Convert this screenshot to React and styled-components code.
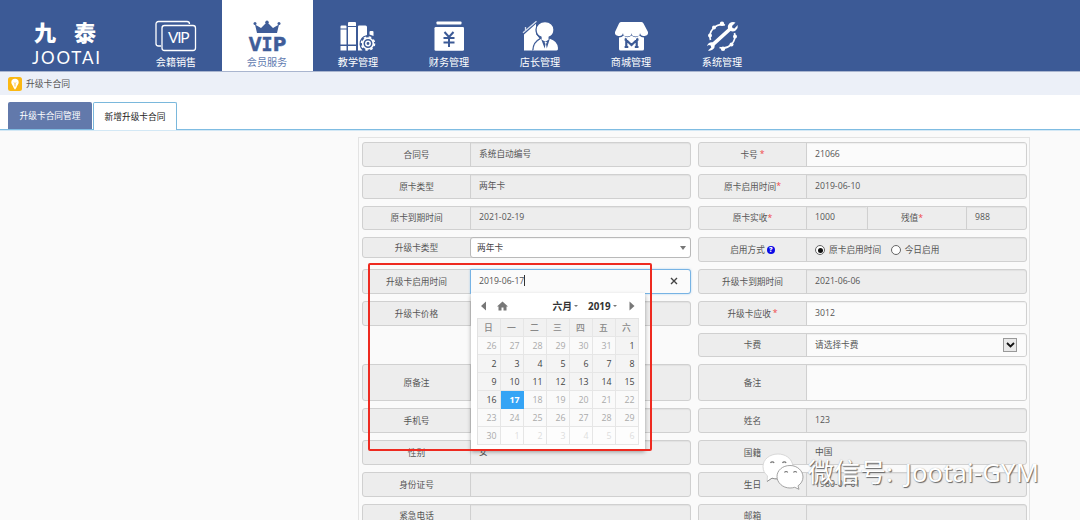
import React from 'react'
import styled, { createGlobalStyle, css } from 'styled-components'

const GlobalStyle = createGlobalStyle`
  * { box-sizing: border-box; }
  body {
    margin: 0;
    height: 520px;
    overflow: hidden;
    background: #fafafa;
    color: #555;
    font-family: "Open Sans", "Noto Sans CJK SC", sans-serif;
    font-size: 8.7px;
  }
`;

const Page = styled.div`
  position: relative;
  width: 1080px;
  height: 520px;
  overflow: hidden;
`;

const Header = styled.header`
  display: flex;
  height: 72px;
  background: #3c5a96;
  border-bottom: 1px solid #a9b5cf;
`;

const Logo = styled.div`
  width: 130.5px;
  padding: 18px 0 0 32px;
  color: #fff;
`;

const LogoName = styled.div`
  display: flex;
  gap: 18px;
  padding-left: 2px;
  height: 29px;
  line-height: 29px;
  font-size: 22px;
  font-weight: 900;
`;

const LogoLatin = styled.div`
  font-family: Lato, sans-serif;
  font-size: 17px;
  line-height: 21px;
  letter-spacing: 1.8px;
`;

const NavItem = styled.a`
  display: flex;
  flex-direction: column;
  align-items: center;
  width: 91px;
  height: 71px;
  padding-top: 19px;
  font-size: 10.1px;
  line-height: 16px;
  color: ${({ $active }) => ($active ? '#5f7bb0' : '#fff')};
  background: ${({ $active }) => ($active ? '#fff' : 'transparent')};
  svg {
    display: block;
    margin-bottom: 1px;
    flex: none;
  }
`;

const Crumb = styled.div`
  display: flex;
  align-items: center;
  gap: 4px;
  height: 23px;
  padding-left: 8px;
  background: #ecf0f8;
  font-size: 8.8px;
`;

const Tabs = styled.div`
  display: flex;
  align-items: flex-end;
  gap: 1px;
  height: 35px;
  padding-left: 8px;
  background: #fff;
  border-bottom: 1px solid #7fbce2;
  box-shadow: 0 1px 0 #d3e8f5;
`;

const Tab = styled.div`
  display: flex;
  align-items: center;
  justify-content: center;
  width: 84px;
  height: 27px;
  border-radius: 2px 2px 0 0;
  background: #6279ab;
  color: #fff;
  ${({ $active }) => $active && css`
    height: 28px;
    margin-bottom: -1px;
    padding-bottom: 1px;
    border: 1px solid #7ab8dc;
    border-bottom: 0;
    background: #fff;
    color: #222;
  `}
`;

const Panel = styled.main`
  display: grid;
  grid-template-columns: 329px 329px;
  grid-template-rows: repeat(7, 24.75px) 37px repeat(4, 24.75px);
  gap: 7px;
  width: 672px;
  margin: 7px 0 0 358px;
  padding: 4px 3px;
  border: 1px solid #e3e3e3;
`;

const Field = styled.div`
  display: flex;
  position: relative;
  height: ${({ $h }) => ($h ? `${$h}px` : '100%')};
  border: 1px solid #d0d0d0;
  border-radius: 3px;
  background: #ededed;
`;

const Label = styled.div`
  display: flex;
  align-items: center;
  justify-content: center;
  flex: none;
  width: ${({ $w }) => $w || 107}px;
`;

const Star = styled.span`
  margin-left: ${({ $gap }) => ($gap ? 2 : 0)}px;
  color: #f04848;
`;

const Value = styled.div`
  display: flex;
  align-items: center;
  flex: ${({ $w }) => ($w ? `none` : 1)};
  width: ${({ $w }) => ($w ? `${$w}px` : 'auto')};
  padding: 0 9px 1px 8px;
  border-left: 1px solid #d0d0d0;
  border-radius: 0 2px 2px 0;
  box-shadow: inset 0 1px 1px rgba(0, 0, 0, 0.05);
  background: ${({ $open }) => ($open ? '#fbfbfb' : 'transparent')};
`;

const InnerLabel = styled(Label)`
  padding-right: 10px;
  border-left: 1px solid #d0d0d0;
`;

const Combo = styled(Value)`
  justify-content: space-between;
  margin: -1px;
  margin-left: 0;
  padding: 0 4px 0 6px;
  border: 1px solid #b9b9b9;
  border-radius: 3px;
  background: #fff;
  color: #444;
`;

const DateInput = styled(Value)`
  margin: -1px;
  margin-left: 0;
  padding-right: 12px;
  border: 1px solid #77b3e4;
  border-radius: 0 3px 3px 0;
  background: #fbfbfb;
  box-shadow: 0 0 2px rgba(90, 165, 230, 0.5);
  svg { margin-left: auto; }
`;

const Caret = styled.i`
  width: 1px;
  height: 11px;
  background: #333;
`;

const Triangle = styled.i`
  border: 3px solid transparent;
  border-top: 4px solid #777;
  border-bottom: 0;
`;

const Help = styled.span`
  display: flex;
  align-items: center;
  justify-content: center;
  width: 8px;
  height: 8px;
  margin-left: 2px;
  border-radius: 50%;
  background: #0b0be6;
  color: #fff;
  font-size: 7px;
  font-weight: 800;
`;

const Radio = styled.span`
  display: flex;
  align-items: center;
  justify-content: center;
  width: 10px;
  height: 10px;
  margin-right: 4px;
  margin-top: 2px;
  border: 1px solid #666;
  border-radius: 50%;
  background: #fff;
  &::after {
    content: "";
    width: 5px;
    height: 5px;
    border-radius: 50%;
    background: ${({ $on }) => ($on ? '#111' : 'transparent')};
  }
`;

const RadioText = styled.span`
  margin-right: 9.5px;
`;

const SelectButton = styled.span`
  display: flex;
  align-items: center;
  justify-content: center;
  width: 14px;
  height: 14px;
  margin-left: auto;
  margin-top: 1px;
  border: 1px solid #999;
  background: #e9e9e9;
`;

const Calendar = styled.div`
  position: absolute;
  z-index: 2;
  top: 23px;
  left: 107.5px;
  width: 174px;
  height: 157px;
  padding: 2px 6px 0;
  background: #fff;
  box-shadow: 0 2px 4px rgba(0, 0, 0, 0.35);
`;

const CalendarHead = styled.div`
  display: flex;
  align-items: center;
  height: 23px;
  padding: 0 3px 1px 1px;
  color: #333;
  font-size: 9.8px;
  font-weight: 700;
`;

const HeadText = styled.span`
  display: flex;
  align-items: center;
  gap: 2px;
  margin-left: ${({ $ml }) => $ml}px;
  margin-right: ${({ $mr }) => $mr || 0}px;
  &::after {
    content: "";
    border: 2px solid transparent;
    border-top-color: #777;
    border-bottom: 0;
  }
`;

const Days = styled.div`
  display: grid;
  grid-template-columns: repeat(7, 23px);
  grid-auto-rows: 18px;
  width: 162px;
  border: solid #e2e2e2;
  border-width: 1px 0 0 1px;
`;

const tones = {
  on: css`background: #f4f4f4; color: #444;`,
  off: css`background: #fafafa; color: #aaa;`,
  faint: css`background: #fdfdfd; color: #ddd;`,
  head: css`background: #f1f1f1; color: #888; justify-content: center; padding: 0; font-weight: 500;`,
  today: css`background: #35a4f5; color: #fff; font-weight: 700; border-color: #35a4f5;`,
};

const Day = styled.div`
  display: flex;
  align-items: center;
  justify-content: flex-end;
  padding-right: 3px;
  border: solid #e6e6e6;
  border-width: 0 1px 1px 0;
  font-size: 8.8px;
  ${({ $tone }) => tones[$tone]}
`;

const Highlight = styled.div`
  position: absolute;
  z-index: 3;
  left: 368px;
  top: 263px;
  width: 284px;
  height: 188px;
  border: 2px solid #ee2a20;
  border-radius: 2px;
`;

const Watermark = styled.div`
  position: absolute;
  z-index: 4;
  left: 760px;
  top: 450px;
  display: flex;
  align-items: center;
  height: 46px;
  color: #fff;
  white-space: nowrap;
  text-shadow: 1px 1px 1px #666, 0 0 1px #aaa;
`;

const WatermarkText = styled.span`
  margin: -4px 0 0 2px;
  font-family: "Noto Sans", "Noto Sans CJK SC", sans-serif;
  font-size: 26px;
  font-weight: 400;
  span {
    margin-left: 5px;
    font-size: 25.5px;
    letter-spacing: 0.2px;
  }
`;

const NavSvg = ({ children }) => (
  <svg width="46" height="34" viewBox="0 0 46 34" fill="none">{children}</svg>
)

const CardsIcon = () => (
  <NavSvg>
    <path d="M8 27H5.500a2.500 2.500 0 0 1-2.500-2.500V5a2.500 2.500 0 0 1 2.500-2.500H34A2.500 2.500 0 0 1 36.500 5" stroke="#fff" strokeWidth="1.300" />
    <rect x="9" y="6.500" width="33.500" height="25" rx="2.500" stroke="#fff" strokeWidth="1.300" />
    <text x="15" y="24.300" fill="#fff" fontFamily="Lato" fontWeight="400" fontSize="15.500" textLength="21.500">VIP</text>
  </NavSvg>
)

const CrownIcon = () => (
  <NavSvg>
    <g fill="#3f5d99">
      <path d="M13 14 11 5.500l6 3.500 6-6 6 6 6-3.500-2 8.500z" />
      <circle cx="11" cy="4.500" r="1.500" />
      <circle cx="23" cy="3.300" r="1.700" />
      <circle cx="35" cy="4.500" r="1.500" />
      <g fontFamily="DejaVu Sans" fontWeight="700" fontSize="19.500" stroke="#3f5d99" strokeWidth=".5">
        <text x="4.700" y="31.500" textLength="12.700" lengthAdjust="spacingAndGlyphs">V</text>
        <text x="17.600" y="31.500" fontFamily="DejaVu Sans Mono" textLength="11" lengthAdjust="spacingAndGlyphs">I</text>
        <text x="28.800" y="31.500" textLength="13.500" lengthAdjust="spacingAndGlyphs">P</text>
      </g>
    </g>
  </NavSvg>
)

const BooksIcon = () => (
  <NavSvg>
    <g fill="#fff">
      <path d="M5.500 7.500q0-1 1-1h4q1 0 1 1v2h-6zM5.500 10.500h6v15h-6zM5.500 27h6v4.500h-6z" />
      <path d="M13 4q0-1 1-1h6q1 0 1 1v3h-8zM13 8h8v17.500h-8zM13 27h8v4.500h-8z" />
      <path d="M23 7.500q0-1 1-1h6.500q1.500 0 1.500 1.500v8q-8 2-7.500 9.500.500 4 3 6H23z" />
      <path d="M34.500 13q0-1 1-1h2q1 0 1 1v4l-4-1.500z" />
    </g>
    <circle cx="33" cy="24.500" r="5.300" stroke="#fff" strokeWidth="1.700" />
    <circle cx="33" cy="24.500" r="6.500" stroke="#fff" strokeWidth="1.600" strokeDasharray="2.550 2.550" />
    <circle cx="33" cy="24.500" r="2.200" stroke="#fff" strokeWidth="1.500" />
  </NavSvg>
)

const MoneyIcon = () => (
  <NavSvg>
    <rect x="10.500" y="2.500" width="25" height="3" rx="0.800" fill="#fff" />
    <rect x="8.500" y="8" width="29.500" height="23.800" rx="1.300" fill="#fff" />
    <path d="m18.500 13 4.500 5 4.500-5M23 18v10M17.500 19h11M17.500 23.500h11" stroke="#3c5a96" strokeWidth="2" />
  </NavSvg>
)

const ManagerIcon = () => (
  <NavSvg>
    <path d="M7 31.500V15.500L19 4.800V15l4 5q-5.500 3-6 11.500z" fill="#fff" />
    <path d="m6 13.700 13.500-11.500M8.500 11V8" stroke="#d5dded" strokeWidth="1.300" />
    <path d="M28 2.700c5.500 0 9 3.500 9 8 0 3.500-2 6.300-4.800 7.500V21l-3.700 2.500L24 21v-2.800C21 17 19 14.200 19 10.700c0-4.500 3.500-8 9-8z" fill="#fff" stroke="#3c5a96" strokeWidth="1.300" />
    <path d="M16.500 31.500q.300-8.500 7.500-11.700l3.700 9.700.8-4.500-1-2h2.500l-1 2 .8 4.500 3-9.700q7.500 2.200 8.200 9.200.2 2.500-1.500 2.500z" fill="#fff" />
    <path d="M15.800 31.500q.300-8.500 7.500-12" stroke="#3c5a96" strokeWidth="1.300" />
  </NavSvg>
)

const ShopIcon = () => (
  <NavSvg>
    <path d="M11 4.500Q11.500 3 13 3h20.500q1.500 0 2 1.500L40 13a4 3.500 0 0 1-8 1 4.200 3.500 0 0 1-8.500 0 4.200 3.500 0 0 1-8.500 0 4 3.500 0 0 1-8-1z" fill="#fff" />
    <path d="M11 18.500q3 0 4.500-2 4 3.500 8 0 4 3.500 8 0 1.500 2 4.500 2V30q0 1.500-1.500 1.500h-22Q11 31.500 11 30z" fill="#fff" />
    <path d="M18.300 28.500V21l5.200 5 5.200-5v7.500M16.600 28h3.700M26.800 28h3.700M16.600 20.700h2.500M28 20.700h2.500" stroke="#3c5a96" strokeWidth="2.200" />
  </NavSvg>
)

const WrenchIcon = () => (
  <NavSvg>
    <path d="M11.500 21A12 12 0 0 1 26 6M35.500 14A12 12 0 0 1 20.500 28.500" stroke="#fff" strokeWidth="1.700" />
    <g fill="#fff">
      <circle cx="11" cy="16.500" r="2" />
      <circle cx="15" cy="8.500" r="2" />
      <circle cx="23" cy="4.800" r="2.200" />
      <circle cx="36" cy="17.500" r="2" />
      <circle cx="32.500" cy="25.500" r="2" />
      <circle cx="24" cy="29.800" r="2.200" />
      <path d="M36.500 3.500 33 7l.5 2 2 .5L38.700 6A5.300 5.300 0 0 1 31.500 12L15.800 26.200A5.300 5.300 0 0 1 9 31.500L12.300 28.500l-.6-2-2-.5L8 27.200A5.300 5.300 0 0 1 13.700 23.300L29 9.500A5.300 5.300 0 0 1 36.500 3.500z" />
    </g>
  </NavSvg>
)

const nav = [
  ['会籍销售', CardsIcon],
  ['会员服务', CrownIcon],
  ['教学管理', BooksIcon],
  ['财务管理', MoneyIcon],
  ['店长管理', ManagerIcon],
  ['商城管理', ShopIcon],
  ['系统管理', WrenchIcon],
]

const BulbIcon = () => (
  <svg width="14" height="14" viewBox="0 0 14 14">
    <rect width="14" height="14" rx="2.500" fill="#fbb813" />
    <path d="M7 1.800a3.700 3.700 0 0 1 3.700 3.700C10.700 7.500 8.800 8.500 8.500 10.500L7 12.800 5.500 10.500C5.200 8.500 3.300 7.500 3.300 5.500A3.700 3.700 0 0 1 7 1.800z" fill="#fff" />
    <path d="M6 5.500 7 6.500l1-1M7 6.500v3" stroke="#fbb813" strokeWidth=".8" fill="none" />
  </svg>
)

const WechatIcon = () => (
  <svg width="46" height="46" viewBox="0 0 46 46" fill="#fff" strokeWidth=".9">
    <path d="M18 4C9.500 4 3 9.500 3 16.500c0 4 1.500 7 4.500 9.300L7 31.500l5-3.300c2 .6 4 .8 7 .5C32 28 33 22 32.500 14 31 8 25 4 18 4z" stroke="#d4d4d4" />
    <path d="M7 31.500l5-3.300c2 .6 3.500.7 5 .7" stroke="#888" fill="none" />
    <path d="M30 15.500c-7.500 0-13 5-13 11s5.500 11.500 13 11.500c1.700 0 3.200-.2 4.700-.7l4.300 2-1-3.500c3-2 5-5 5-8.800 0-6-5.500-11.500-13-11.500z" stroke="#999" />
    <g fill="none" stroke="#777" strokeWidth="1.200">
      <path d="M10.500 13a2 2 0 0 1 3.600 0M22.500 13a2 2 0 0 1 3.600 0M24.500 22.500a1.800 1.800 0 0 1 3.200 0M33.500 22.500a1.800 1.800 0 0 1 3.200 0" />
    </g>
  </svg>
)

const weekdays = ['日', '一', '二', '三', '四', '五', '六']

// first cell is May 26, the 17th is the selected day
const days = Array.from({ length: 42 }, (_, i) => {
  if (i < 6) return { n: 26 + i, tone: 'off' }
  if (i > 35) return { n: i - 35, tone: 'faint' }
  const n = i - 5
  return { n, tone: n === 17 ? 'today' : n < 17 ? 'on' : 'off' }
})

const DatePicker = () => (
  <Calendar>
    <CalendarHead>
      <svg width="34" height="12" viewBox="0 0 34 12" fill="#777">
        <path d="M8 1.500v9L3 6zM24.500 1.500 19 6.500H20.500v4h3V7.500h2v3h3v-4h1.500z" />
      </svg>
      <HeadText $ml={41}>六月</HeadText>
      <HeadText $ml={10} $mr={12}>2019</HeadText>
      <svg width="6" height="10" viewBox="0 0 6 10" fill="#777"><path d="M.5.5v9L5.500 5z" /></svg>
    </CalendarHead>
    <Days>
      {weekdays.map((d) => <Day key={d} $tone="head">{d}</Day>)}
      {days.map((d, i) => <Day key={i} $tone={d.tone}>{d.n}</Day>)}
    </Days>
  </Calendar>
)

const TextField = ({ label, value, star, open }) => (
  <Field>
    <Label>{label}{star && <Star $gap={star === 'wide'}>*</Star>}</Label>
    <Value $open={open}>{value}</Value>
  </Field>
)

const App = () => {
  return (
    <Page>
      <GlobalStyle />
      <Header>
        <Logo>
          <LogoName><span>九</span><span>泰</span></LogoName>
          <LogoLatin>JOOTAI</LogoLatin>
        </Logo>
        {nav.map(([text, Icon]) => (
          <NavItem key={text} $active={text === '会员服务'}>
            <Icon />
            {text}
          </NavItem>
        ))}
      </Header>
      <Crumb><BulbIcon />升级卡合同</Crumb>
      <Tabs>
        <Tab>升级卡合同管理</Tab>
        <Tab $active>新增升级卡合同</Tab>
      </Tabs>
      <Panel>
        <TextField label="合同号" value="系统自动编号" />
        <TextField label="卡号" value="21066" star="wide" open />

        <TextField label="原卡类型" value="两年卡" />
        <TextField label="原卡启用时间" value="2019-06-10" star="tight" />

        <TextField label="原卡到期时间" value="2021-02-19" />
        <Field>
          <Label>原卡实收<Star>*</Star></Label>
          <Value $w={61}>1000</Value>
          <InnerLabel $w={99}>残值<Star>*</Star></InnerLabel>
          <Value>988</Value>
        </Field>

        <Field $h={21}>
          <Label>升级卡类型</Label>
          <Combo>两年卡<Triangle /></Combo>
        </Field>
        <Field>
          <Label>启用方式<Help>?</Help></Label>
          <Value>
            <Radio $on /><RadioText>原卡启用时间</RadioText>
            <Radio /><RadioText>今日启用</RadioText>
          </Value>
        </Field>

        <Field>
          <Label>升级卡启用时间</Label>
          <DateInput>
            2019-06-17<Caret />
            <svg width="8" height="8" viewBox="0 0 8 8" stroke="#444" strokeWidth="1.400"><path d="m1 1 6 6M7 1 1 7" /></svg>
          </DateInput>
          <DatePicker />
        </Field>
        <TextField label="升级卡到期时间" value="2021-06-06" />

        <TextField label="升级卡价格" />
        <TextField label="升级卡应收" value="3012" star="wide" open />

        <div />
        <Field>
          <Label>卡费</Label>
          <Value $open>
            <span>请选择卡费</span>
            <SelectButton>
              <svg width="9" height="6" viewBox="0 0 9 6" fill="none" stroke="#111" strokeWidth="1.800"><path d="m1 1 3.500 3.500L8 1" /></svg>
            </SelectButton>
          </Value>
        </Field>

        <TextField label="原备注" />
        <TextField label="备注" open />

        <TextField label="手机号" />
        <TextField label="姓名" value="123" />

        <TextField label="性别" value="女" />
        <TextField label="国籍" value="中国" />

        <TextField label="身份证号" />
        <TextField label="生日" value="1980-01-01" />

        <TextField label="紧急电话" />
        <TextField label="邮箱" />
      </Panel>
      <Highlight />
      <Watermark>
        <WechatIcon />
        <WatermarkText>微信号: <span>Jootai-GYM</span></WatermarkText>
      </Watermark>
    </Page>
  )
}

export default App
